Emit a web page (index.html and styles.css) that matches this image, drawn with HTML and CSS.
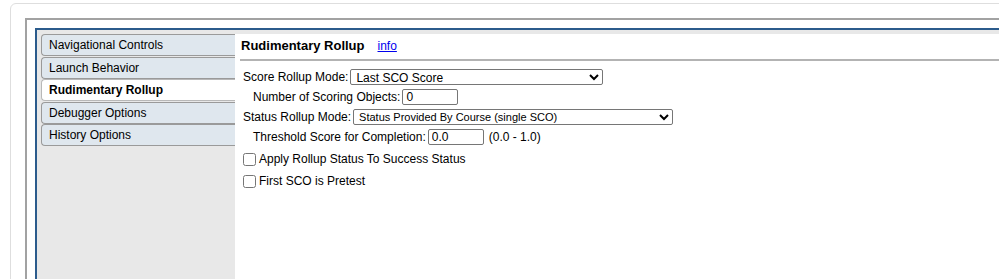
FILE: index.html
```html
<!DOCTYPE html>
<html lang="en">
<head>
  <meta charset="UTF-8" />
  <title>Rudimentary Rollup</title>
  <link rel="stylesheet" href="styles.css">
</head>
<body>
  <div class="card">
    <div class="frame">
      <div class="panel">
        <div class="sidebar">
          <div class="tab">Navigational Controls</div>
          <div class="tab">Launch Behavior</div>
          <div class="tab active">Rudimentary Rollup</div>
          <div class="tab">Debugger Options</div>
          <div class="tab">History Options</div>
        </div>
        <div class="content">
          <div class="heading">
            <h2>Rudimentary Rollup</h2>
            <a href="#">info</a>
          </div>

          <div class="fields">
            <div class="row">
              <label for="scoreMode">Score Rollup Mode:</label>
              <select id="scoreMode" class="select-score">
                <option>Last SCO Score</option>
              </select>
            </div>
            <div class="row sub">
              <label for="scoringObjects">Number of Scoring Objects:</label>
              <input type="text" id="scoringObjects" value="0" />
            </div>
            <div class="row">
              <label for="statusMode">Status Rollup Mode:</label>
              <select id="statusMode" class="select-status">
                <option>Status Provided By Course (single SCO)</option>
              </select>
            </div>
            <div class="row sub">
              <label for="threshold">Threshold Score for Completion:</label>
              <input type="text" id="threshold" value="0.0" />
              <span class="hint">(0.0 - 1.0)</span>
            </div>

            <label class="check first">
              <input type="checkbox" />
              Apply Rollup Status To Success Status
            </label>
            <label class="check">
              <input type="checkbox" />
              First SCO is Pretest
            </label>
          </div>
        </div>
      </div>
    </div>
  </div>
</body>
</html>
```

FILE: styles.css
```css
html, body {
  overflow: hidden;
}
body {
  margin: 0;
  padding: 3px 0 0 10px;
  font-family: "Liberation Sans", Arial, sans-serif;
  font-size: 12px;
  color: #000;
  background: #fff;
}
.card {
  border: 1px solid #dedede;
  border-radius: 6px;
  padding: 14px 0 0 14px;
  width: 1020px;
  height: 320px;
}
.frame {
  border-top: 2px solid #a2a2a2;
  border-left: 2px solid #a2a2a2;
  padding: 8px 0 0 8px;
  height: 300px;
}
.panel {
  display: flex;
  border-top: 2px solid #2b5b8c;
  border-left: 2px solid #2b5b8c;
  background: #e8e8e8;
  padding-top: 4px;
  height: 280px;
}
.sidebar {
  width: 194px;
  padding-left: 4px;
  flex-shrink: 0;
}
.tab {
  height: 20px;
  line-height: 20px;
  margin-bottom: 0.5px;
  padding-left: 7px;
  background: #dfe7ee;
  border: 1px solid #9a9a9a;
  border-right: none;
  border-radius: 4px 0 0 4px;
  white-space: nowrap;
}
.tab.active {
  background: #fff;
  font-weight: bold;
  border-color: #b8b8b8;
  margin-right: -1px;
}
.content {
  flex: 1;
  background: #fff;
  padding-left: 5px;
}
.heading {
  display: flex;
  align-items: baseline;
  gap: 13px;
  padding: 4px 0 5px 1px;
  border-bottom: 2px solid #b3b3b3;
}
.heading h2 {
  margin: 0;
  font-size: 13px;
  line-height: 16px;
  font-weight: bold;
}
.heading a {
  color: #0000ee;
  font-size: 12px;
}
.fields {
  padding-top: 6px;
}
.row {
  display: flex;
  align-items: center;
  height: 20px;
  padding-left: 3px;
}
.row.sub {
  padding-left: 13px;
}
.row label {
  margin-right: 2px;
  white-space: nowrap;
}
select {
  height: 16px;
  font-family: "Liberation Sans", Arial, sans-serif;
  font-size: 12px;
  border: 1px solid #767676;
  border-radius: 2px;
  background: #fff;
  padding: 0 1px;
}
.select-score {
  width: 253px;
}
.select-status {
  width: 320px;
  font-size: 11px;
}
.row input[type="text"] {
  width: 48px;
  height: 14px;
  padding: 0 3px;
  font-family: "Liberation Sans", Arial, sans-serif;
  font-size: 12px;
  border: 1px solid #767676;
  border-radius: 2px;
}
.hint {
  margin-left: 5px;
}
.check {
  display: flex;
  align-items: center;
  height: 22px;
}
.check.first {
  margin-top: 1px;
}
.check input {
  margin: 0 3px 0 3px;
  width: 13px;
  height: 13px;
}
```
